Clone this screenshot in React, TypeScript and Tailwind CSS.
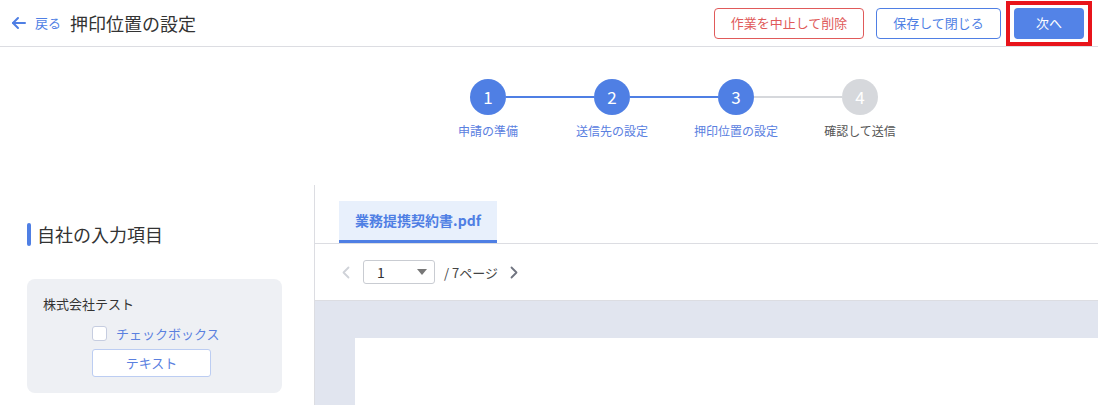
import React from "react";

const font = { fontFamily: '"Noto Sans CJK JP", "Noto Sans", sans-serif' };

function Step({ n, active }: { n: number; active: boolean }) {
  return (
    <div
      className={`w-[36px] h-[36px] rounded-full flex items-center justify-center text-white text-[17px] ${
        active ? "bg-[#4f7fe4]" : "bg-[#d6d8dc]"
      }`}
    >
      {n}
    </div>
  );
}

function Line({ active }: { active: boolean }) {
  return <div className={`w-[88px] h-[2px] ${active ? "bg-[#4f7fe4]" : "bg-[#d6d8dc]"}`} />;
}

export default function App() {
  const labels = ["申請の準備", "送信先の設定", "押印位置の設定", "確認して送信"];
  return (
    <div className="w-[1098px] h-[405px] overflow-hidden bg-white text-[#333]" style={font}>
      {/* Header */}
      <div className="h-[47px] border-b border-[#dcdde2] flex items-center">
        <div className="flex items-center pl-[11px]">
          <svg width="15" height="14" viewBox="0 0 15 14" fill="none" stroke="#4f7fe4" strokeWidth="2" strokeLinecap="round" strokeLinejoin="round">
            <path d="M14 7H2" />
            <path d="M7 2L2 7l5 5" />
          </svg>
          <span className="ml-[9px] text-[13px] text-[#4f7fe4]">戻る</span>
          <span className="ml-[9px] text-[18px] text-[#333] leading-none">押印位置の設定</span>
        </div>
        <div className="ml-auto flex items-center pr-[6px]">
          <button className="w-[150px] h-[31px] rounded-[4px] border border-[#e05a5a] text-[#e05a5a] text-[13px] flex items-center justify-center">
            作業を中止して削除
          </button>
          <button className="ml-[12px] w-[125px] h-[31px] rounded-[4px] border border-[#4f7fe4] text-[#4f7fe4] text-[13px] flex items-center justify-center">
            保存して閉じる
          </button>
          <div className="ml-[5px] border-[4px] border-[#e8141b] px-[4px] py-[3px]">
            <button className="w-[70px] h-[31px] rounded-[4px] bg-[#5383e7] text-white text-[13px] flex items-center justify-center">
              次へ
            </button>
          </div>
        </div>
      </div>

      {/* Stepper */}
      <div className="h-[138px] pt-[32px]">
        <div className="flex items-center ml-[470px]">
          <Step n={1} active />
          <Line active />
          <Step n={2} active />
          <Line active />
          <Step n={3} active />
          <Line active={false} />
          <Step n={4} active={false} />
        </div>
        <div className="flex ml-[426px] mt-[10px]">
          {labels.map((l, i) => (
            <div
              key={l}
              className={`w-[124px] text-center text-[12px] leading-none ${i < 3 ? "text-[#5a80df]" : "text-[#555]"}`}
            >
              {l}
            </div>
          ))}
        </div>
      </div>

      {/* Main */}
      <div className="flex h-[220px]">
        <div className="w-[315px] shrink-0 border-r border-[#dcdde2] pt-[37px]">
          <div className="flex items-center ml-[27px] h-[24px]">
            <div className="w-[4px] h-[23px] rounded-[2px] bg-[#4f7fe4]" />
            <span className="ml-[6px] text-[18px] leading-none text-[#333]">自社の入力項目</span>
          </div>
          <div className="mt-[33px] ml-[27px] w-[255px] h-[114px] rounded-[8px] bg-[#eef0f4] pt-[18px] px-[16px]">
            <div className="text-[13px] leading-none text-[#333]">株式会社テスト</div>
            <div className="ml-[49px] mt-[16px] flex items-center">
              <div className="w-[15px] h-[15px] rounded-[3px] border border-[#c6cde0] bg-white" />
              <span className="ml-[9px] text-[13px] leading-none text-[#5a80df]">チェックボックス</span>
            </div>
            <div className="ml-[49px] mt-[8px] w-[119px] h-[28px] rounded-[3px] border border-[#bccdf2] bg-white flex items-center justify-center text-[13px] text-[#5a80df]">
              テキスト
            </div>
          </div>
        </div>
        <div className="flex-1 flex flex-col">
          <div className="pt-[16px] pl-[24px] border-b border-[#dcdde2]">
            <div className="w-[158px] h-[42px] bg-[#e8f0fc] border-b-[3px] border-[#4f7fe4] flex items-center justify-center text-[14px] font-bold text-[#4f7fe4]">
              業務提携契約書.pdf
            </div>
          </div>
          <div className="h-[57px] border-b border-[#dcdde2] flex items-center pl-[27px]">
            <svg width="8" height="13" viewBox="0 0 8 13" fill="none" stroke="#cfd2d8" strokeWidth="1.8" strokeLinecap="round" strokeLinejoin="round">
              <path d="M6.5 1.5L1.5 6.5l5 5" />
            </svg>
            <div className="ml-[13px] w-[72px] h-[24px] rounded-[3px] border border-[#c9ccd2] flex items-center pl-[13px] pr-[7px]">
              <span className="text-[14px] text-[#333] leading-none">1</span>
              <svg className="ml-auto" width="10" height="6" viewBox="0 0 10 6">
                <path d="M0 0h10L5 6z" fill="#777" />
              </svg>
            </div>
            <span className="ml-[9px] text-[13px] text-[#444] leading-none">/ 7ページ</span>
            <svg className="ml-[12px]" width="8" height="13" viewBox="0 0 8 13" fill="none" stroke="#707480" strokeWidth="1.8" strokeLinecap="round" strokeLinejoin="round">
              <path d="M1.5 1.5l5 5-5 5" />
            </svg>
          </div>
          <div className="flex-1 bg-[#e1e5ef] pt-[37px] pl-[40px]">
            <div className="w-full h-full bg-white" />
          </div>
        </div>
      </div>
    </div>
  );
}
